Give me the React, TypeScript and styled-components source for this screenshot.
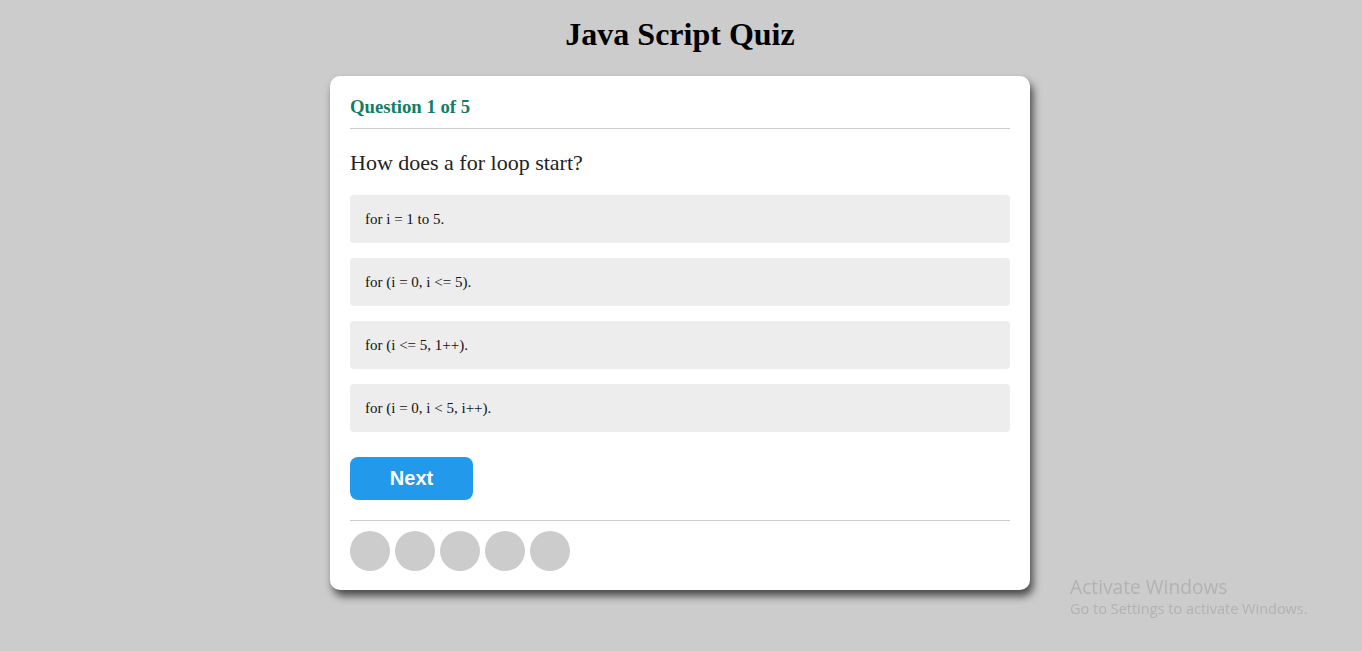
import React from "react";
import styled, { createGlobalStyle } from "styled-components";

const GlobalStyle = createGlobalStyle`
  html, body {
    margin: 0;
    padding: 0;
    background: #cccccc;
    font-family: "Liberation Serif", "Times New Roman", serif;
  }
  * { box-sizing: border-box; }
`;

const Page = styled.div`
  display: flex;
  flex-direction: column;
  align-items: center;
  min-height: 651px;
  padding-right: 2px;
`;

const Title = styled.h1`
  margin: 16px 0 23px;
  font-size: 32px;
  line-height: 37px;
  font-weight: bold;
  color: #000;
`;

const Card = styled.div`
  width: 700px;
  background: #fff;
  border-radius: 10px;
  padding: 20px 20px 19px;
  box-shadow: 3px 6px 8px rgba(0, 0, 0, 0.65);
  display: flex;
  flex-direction: column;
`;

const Header = styled.h3`
  margin: 0;
  font-size: 18.72px;
  line-height: 21px;
  font-weight: bold;
  color: #127d66;
  padding-bottom: 11px;
  border-bottom: 1px solid #cccccc;
`;

const QuestionText = styled.p`
  margin: 21px 0 20px;
  font-size: 22px;
  line-height: 25px;
  color: #222;
`;

const Options = styled.div`
  display: flex;
  flex-direction: column;
  gap: 15px;
`;

const Option = styled.div`
  height: 48px;
  display: flex;
  align-items: center;
  padding-left: 15px;
  background: #ededed;
  border-radius: 4px;
  font-size: 15px;
  color: #111;
`;

const NextButton = styled.button`
  margin-top: 25px;
  width: 123px;
  height: 43px;
  border: none;
  border-radius: 8px;
  background: #2299ea;
  color: #fff;
  font-family: "Liberation Sans", Arial, sans-serif;
  font-weight: bold;
  font-size: 20px;
  cursor: pointer;
`;

const Footer = styled.div`
  margin-top: 20px;
  padding-top: 10px;
  border-top: 1px solid #cccccc;
  display: flex;
  gap: 5px;
`;

const Dot = styled.span`
  width: 40px;
  height: 40px;
  border-radius: 50%;
  background: #cccccc;
`;

const Watermark = styled.div`
  position: fixed;
  left: 1070px;
  top: 575px;
  font-family: "Open Sans", "Noto Sans", sans-serif;
  color: #b2b2b2;
  pointer-events: none;
`;

const WmTitle = styled.div`
  font-size: 19.2px;
  line-height: 24px;
`;

const WmSub = styled.div`
  font-size: 14.5px;
  line-height: 20px;
`;

const options = [
  "for i = 1 to 5.",
  "for (i = 0, i <= 5).",
  "for (i <= 5, 1++).",
  "for (i = 0, i < 5, i++).",
];

export default function App() {
  return (
    <>
      <GlobalStyle />
      <Page>
        <Title>Java Script Quiz</Title>
        <Card>
          <Header>Question 1 of 5</Header>
          <QuestionText>How does a for loop start?</QuestionText>
          <Options>
            {options.map((o) => (
              <Option key={o}>{o}</Option>
            ))}
          </Options>
          <div>
            <NextButton>Next</NextButton>
          </div>
          <Footer>
            {[0, 1, 2, 3, 4].map((i) => (
              <Dot key={i} />
            ))}
          </Footer>
        </Card>
      </Page>
      <Watermark>
        <WmTitle>Activate Windows</WmTitle>
        <WmSub>Go to Settings to activate Windows.</WmSub>
      </Watermark>
    </>
  );
}
